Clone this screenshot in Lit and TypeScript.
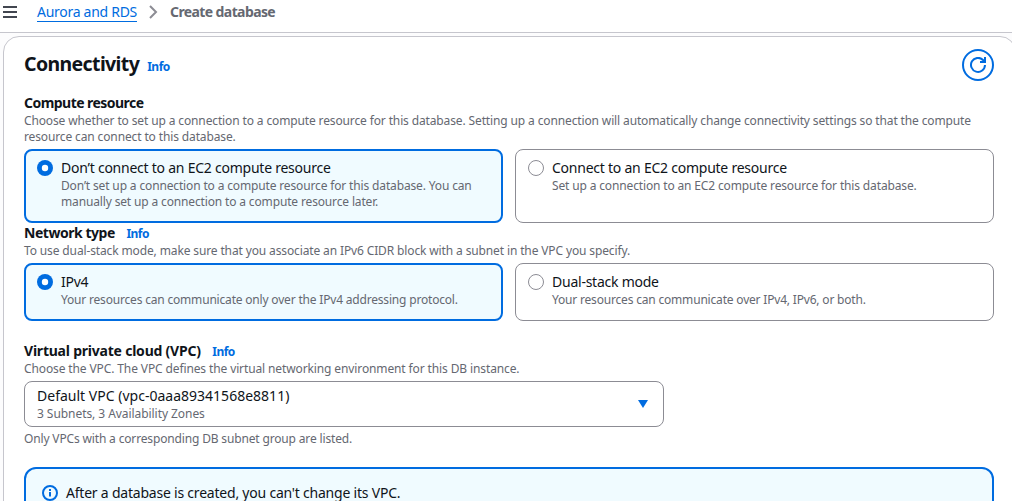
import { LitElement, html, css, svg } from "lit";
import { customElement, property } from "lit/decorators.js";

const textStyles = css`
  .title { font-size: 14px; line-height: 20px; color: #0f141a; white-space: nowrap; letter-spacing: -0.24px; }
  .small { font-size: 12px; line-height: 16px; color: #656871; white-space: nowrap; letter-spacing: -0.13px; }
`;

@customElement("choice-tile")
class ChoiceTile extends LitElement {
  @property() label = "";
  @property({ type: Boolean }) selected = false;
  static styles = [
    textStyles,
    css`
      :host { display: block; }
      .tile { box-sizing: border-box; height: 100%; display: flex; gap: 8px; border: 1px solid #8c8c94; border-radius: 8px; padding: 8px 12px 12px; background: #fff; }
      .selected { border: 2px solid #006ce0; background: #f0fbff; padding: 7px 11px 11px; }
      svg { display: block; flex: none; margin-top: 2px; }
      .small { letter-spacing: var(--hint-tracking, -0.147px); }
    `,
  ];
  render() {
    return html`<div class="tile ${this.selected ? "selected" : ""}">
      <svg width="16" height="16" viewBox="0 0 16 16">
        ${this.selected
          ? svg`<circle cx="8" cy="8" r="8" fill="#006ce0"/><circle cx="8" cy="8" r="3.2" fill="#fff"/>`
          : svg`<circle cx="8" cy="8" r="7.5" fill="#fff" stroke="#8c8c94"/>`}
      </svg>
      <div>
        <div class="title">${this.label}</div>
        <div class="small"><slot></slot></div>
      </div>
    </div>`;
  }
}

@customElement("app-root")
class AppRoot extends LitElement {
  static styles = [
    textStyles,
    css`
      :host { display: block; height: 501px; overflow: hidden; background: #fcfcfd; font-family: "Noto Sans", "Open Sans", sans-serif; }
      header { box-sizing: border-box; height: 33px; padding: 2px 0 10px 2px; border-bottom: 1px solid #c6c6cd; background: #fff; display: flex; align-items: center; font-size: 14px; line-height: 20px; white-space: nowrap; }
      svg { display: block; flex: none; }
      .home { margin-left: 20px; height: 19px; line-height: 20px; color: #006ce0; border-bottom: 1px solid #006ce0; letter-spacing: -0.28px; }
      .chevron { margin: 0 12px 0 11px; }
      .current { color: #656871; font-weight: 700; letter-spacing: -0.6px; }
      .panel { box-sizing: border-box; width: 1013px; height: 520px; margin: 3px 0 0 3px; padding: 12px 20px 0; border: 1px solid #c6c6cd; border-radius: 16px; background: #fff; }
      .heading { display: flex; align-items: center; height: 32px; }
      h2 { margin: 0 0 2px; font-size: 19.5px; line-height: 24px; font-weight: 700; color: #0f141a; letter-spacing: -0.62px; }
      .info { color: #006ce0; font-size: 12px; line-height: 16px; font-weight: 700; margin-left: 11.5px; letter-spacing: -0.5px; }
      .heading .info { margin: 4px 0 0 8px; }
      .refresh { box-sizing: border-box; width: 32px; height: 32px; border: 2px solid #006ce0; border-radius: 50%; margin-left: auto; display: grid; place-items: center; }
      .content { width: 970px; }
      .label { display: flex; align-items: baseline; height: 20px; font-weight: 700; letter-spacing: -0.22px; }
      .compute { margin-top: 12px; }
      .compute .label { letter-spacing: -0.54px; }
      .network .label { letter-spacing: -0.46px; }
      .vpc { margin-top: 20px; }
      .tiles { display: grid; grid-template-columns: 479px 479px; gap: 12px; margin-top: 4px; }
      .tall { height: 74px; }
      .short { height: 58px; --hint-tracking: -0.187px; }
      .select { box-sizing: border-box; width: 640px; height: 46px; margin: 4px 0; padding: 4px 15px 4px 12px; border: 1px solid #8c8c94; border-radius: 8px; display: flex; align-items: center; justify-content: space-between; }
      .select .title { letter-spacing: 0.01px; }
      .select .small { letter-spacing: -0.06px; }
      .defines { letter-spacing: -0.117px; }
      .footnote { letter-spacing: -0.155px; }
      .alert { box-sizing: border-box; height: 60px; margin-top: 20px; padding: 14px 16px; border: 2px solid #006ce0; border-radius: 12px; background: #f0fbff; display: flex; gap: 8px; }
      .alert svg { margin-top: 2px; }
      .alert .title { letter-spacing: -0.215px; }
    `,
  ];
  render() {
    return html`
      <header>
        <svg width="15" height="16" viewBox="0 0 15 16" fill="none" stroke="#424650" stroke-width="2"><path d="M1 3h14M1 8h14M1 13h14"/></svg>
        <span class="home">Aurora and RDS</span>
        <svg class="chevron" width="10" height="14" viewBox="0 0 10 14" fill="none" stroke="#8c8c94" stroke-width="2"><path d="M2 1l6 6-6 6"/></svg>
        <span class="current">Create database</span>
      </header>
      <section class="panel">
        <div class="content">
          <div class="heading">
            <h2>Connectivity</h2><span class="info">Info</span>
            <div class="refresh">
              <svg width="16" height="16" viewBox="0 0 16 16" fill="none" stroke="#006ce0" stroke-width="2"><path d="M15 8a7 7 0 1 1-2-5l2 2.5"/><path d="M15 0v5H10"/></svg>
            </div>
          </div>
          <div class="compute">
            <div class="title label">Compute resource</div>
            <div class="small">Choose whether to set up a connection to a compute resource for this database. Setting up a connection will automatically change connectivity settings so that the compute<br />resource can connect to this database.</div>
            <div class="tiles tall">
              <choice-tile selected label="Don’t connect to an EC2 compute resource">Don’t set up a connection to a compute resource for this database. You can<br />manually set up a connection to a compute resource later.</choice-tile>
              <choice-tile label="Connect to an EC2 compute resource">Set up a connection to an EC2 compute resource for this database.</choice-tile>
            </div>
          </div>
          <div class="network">
            <div class="title label">Network type<span class="info">Info</span></div>
            <div class="small">To use dual-stack mode, make sure that you associate an IPv6 CIDR block with a subnet in the VPC you specify.</div>
            <div class="tiles short">
              <choice-tile selected label="IPv4">Your resources can communicate only over the IPv4 addressing protocol.</choice-tile>
              <choice-tile label="Dual-stack mode">Your resources can communicate over IPv4, IPv6, or both.</choice-tile>
            </div>
          </div>
          <div class="vpc">
            <div class="title label">Virtual private cloud (VPC)<span class="info">Info</span></div>
            <div class="small defines">Choose the VPC. The VPC defines the virtual networking environment for this DB instance.</div>
            <div class="select">
              <div>
                <div class="title">Default VPC (vpc-0aaa89341568e8811)</div>
                <div class="small">3 Subnets, 3 Availability Zones</div>
              </div>
              <svg width="10" height="8" viewBox="0 0 10 8"><path d="M0 0h10L5 8z" fill="#006ce0"/></svg>
            </div>
            <div class="small footnote">Only VPCs with a corresponding DB subnet group are listed.</div>
          </div>
          <div class="alert">
            <svg width="16" height="16" viewBox="0 0 16 16" fill="none" stroke="#006ce0" stroke-width="2"><circle cx="8" cy="8" r="7"/><path d="M8 11.5V7M8 6V4"/></svg>
            <div class="title">After a database is created, you can't change its VPC.</div>
          </div>
        </div>
      </section>`;
  }
}
